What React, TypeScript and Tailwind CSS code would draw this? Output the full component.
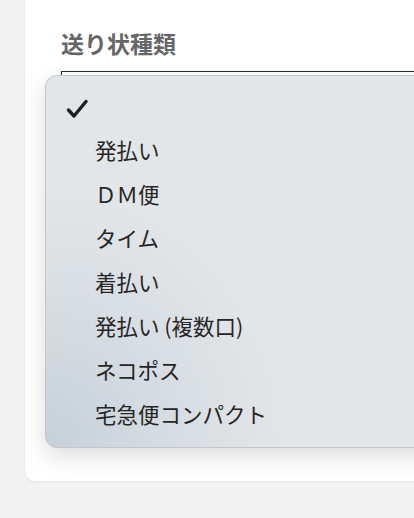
const options = ["発払い", "ＤＭ便", "タイム", "着払い", "発払い (複数口)", "ネコポス", "宅急便コンパクト"]

function Check() {
    return (
        <svg width="22" height="20" viewBox="0 0 22 20" className="block">
            <path d="M2.5 11 L8 17 L20 2.5" fill="none" stroke="#1f1f1f" strokeWidth="3.4" strokeLinecap="round" strokeLinejoin="round" />
        </svg>
    )
}

export default function App() {
    return (
        <main className="min-h-[518px] bg-[#f2f2f2] overflow-hidden" style={{ fontFamily: '"Noto Sans CJK JP", "Noto Sans", sans-serif' }}>
            <section className="ml-[25px] -mt-[20px] w-[420px] h-[501px] bg-white rounded-b-[10px] shadow-[0_1px_3px_rgba(0,0,0,0.06)] pt-[47px] pl-[36px]">
                <h2 className="text-[23px] leading-[32px] font-bold text-[#666666]">送り状種類</h2>
                <div className="relative mt-[12px] h-[44px] border-t border-l border-[#2b2f33]">
                    <div className="absolute left-[-17px] top-[3px] w-[400px] h-[373px] rounded-[12px] border border-[#c4c7ca] shadow-[0_8px_24px_rgba(0,0,0,0.14)] bg-[#e3e6e8] bg-[radial-gradient(ellipse_60%_70%_at_0%_100%,#c6d0da_0%,#d4dbe1_45%,#e3e6e8_100%)] pt-[11px]">
                        <div className="h-[44px] flex items-center pl-[20px]">
                            <Check />
                        </div>
                        {options.map(o => (
                            <div key={o} className="h-[44px] flex items-center pl-[49px] pb-[5px] text-[21.5px] text-[#262626]">
                                {o}
                            </div>
                        ))}
                    </div>
                </div>
            </section>
        </main>
    )
}
